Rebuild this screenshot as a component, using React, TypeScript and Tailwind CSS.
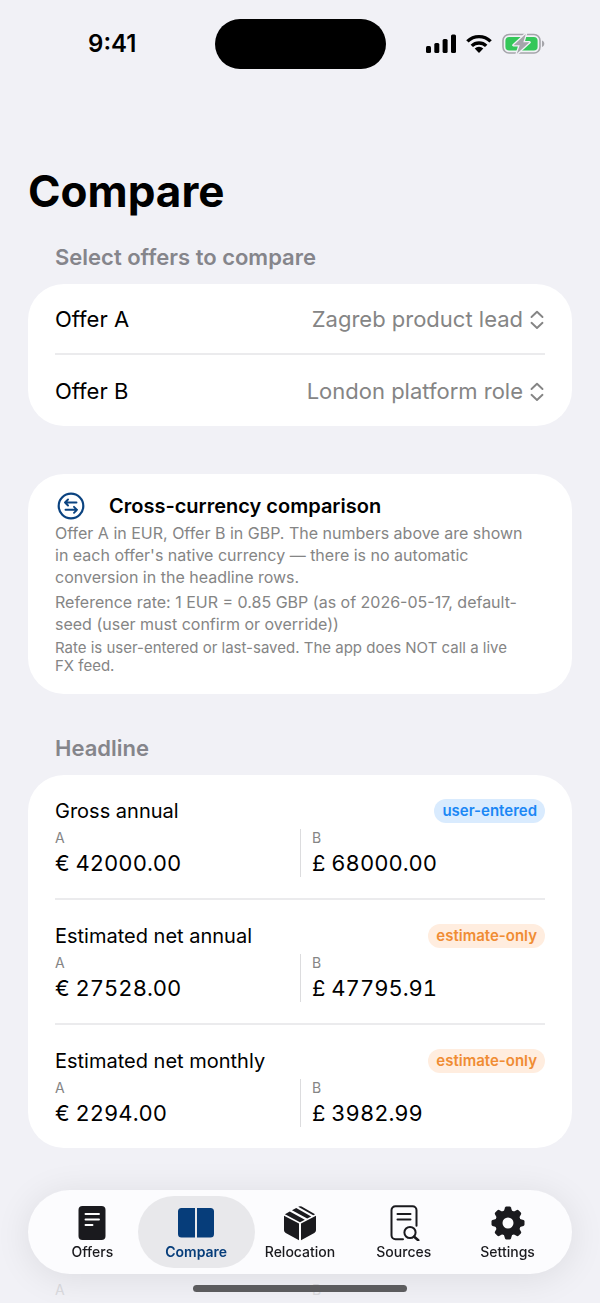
import React, { useState } from 'react';
import clsx from 'clsx';

const offers = ['Zagreb product lead', 'London platform role'];

interface Metric {
  title: string;
  a: string;
  b: string;
  badge: 'user-entered' | 'estimate-only';
}

const metrics: Metric[] = [
  { title: 'Gross annual', a: '€ 42000.00', b: '£ 68000.00', badge: 'user-entered' },
  { title: 'Estimated net annual', a: '€ 27528.00', b: '£ 47795.91', badge: 'estimate-only' },
  { title: 'Estimated net monthly', a: '€ 2294.00', b: '£ 3982.99', badge: 'estimate-only' },
];

const StatusBar: React.FC = () => (
  <header className="grid grid-cols-[1fr_171px_1fr] items-center pt-[19px]">
    <div className="pl-[10px] text-center text-[24px] leading-7 font-semibold">9:41</div>
    <div className="h-[50px] rounded-full bg-black" />
    <div className="flex items-center justify-center gap-[10px] pr-[14px]">
      <svg width="30" height="20" viewBox="0 0 30 20" aria-hidden="true">
        <rect x="0" y="12" width="5" height="7" rx="1.5" />
        <rect x="8.3" y="9" width="5" height="10" rx="1.5" />
        <rect x="16.6" y="5" width="5" height="14" rx="1.5" />
        <rect x="25" y="0.5" width="5" height="18.5" rx="1.5" />
      </svg>
      <svg width="26" height="20" viewBox="0 0 26 20" aria-hidden="true">
        <g fill="none" stroke="#000" strokeWidth="3.4">
          <path d="M1.4 7.4a16.6 16.6 0 0 1 23.2 0" />
          <path d="M5.8 11.9a10.3 10.3 0 0 1 14.4 0" />
        </g>
        <path d="M13 19l-4.3-4.4a6.2 6.2 0 0 1 8.6 0z" />
      </svg>
      <svg width="43" height="22" viewBox="0 0 43 22" aria-hidden="true">
        <rect x="1" y="1.5" width="37" height="18.5" rx="6" fill="none" stroke="#a5a5aa" strokeWidth="1.6" />
        <rect x="3.4" y="4" width="32.2" height="13.6" rx="3.8" fill="#34c759" />
        <path d="M40 7.5v6.4c1.4-.5 2.3-1.8 2.3-3.2S41.4 8 40 7.5z" fill="#a5a5aa" />
        <path
          d="M23.8 1L11.5 12.2h6.2L14.8 20.8 27.5 9.3h-6.2z"
          fill="#a5a5aa"
          stroke="#f1f1f6"
          strokeWidth="2.6"
          strokeLinejoin="round"
          paintOrder="stroke"
        />
      </svg>
    </div>
  </header>
);

const SectionTitle: React.FC<{ children: React.ReactNode }> = ({ children }) => (
  <h2 className="px-[27px] text-[22px] leading-7 font-semibold text-[#85858b]">{children}</h2>
);

const Card: React.FC<{ children: React.ReactNode; className?: string }> = ({ children, className }) => (
  <div className={clsx('rounded-[36px] bg-white px-[27px]', className)}>{children}</div>
);

const OfferRow: React.FC<{ id: string; label: string; initial: string }> = ({ id, label, initial }) => {
  const [value, setValue] = useState(initial);
  return (
    <div className="flex h-[71px] items-center justify-between pt-[2px] text-[22px]">
      <label htmlFor={id}>{label}</label>
      <div className="flex items-center gap-[6px] text-[#858585]">
        <select
          id={id}
          value={value}
          onChange={(e) => setValue(e.target.value)}
          className="appearance-none bg-transparent text-right outline-none [field-sizing:content]"
        >
          {offers.map((offer) => (
            <option key={offer}>{offer}</option>
          ))}
        </select>
        <svg width="16" height="20" viewBox="0 0 16 20" fill="none" stroke="currentColor" strokeWidth="1.9" strokeLinecap="round" strokeLinejoin="round" aria-hidden="true">
          <path d="M2.5 7L8 1.8 13.5 7M2.5 12.8L8 18l5.5-5.2" />
        </svg>
      </div>
    </div>
  );
};

const MetricValue: React.FC<{ label: string; value: string; className?: string }> = ({ label, value, className }) => (
  <div className={className}>
    <div className="text-[14px] leading-[18px] text-[#858585]">{label}</div>
    <div className="mt-[2px] text-[22px] leading-7 tabular-nums">{value}</div>
  </div>
);

const MetricRow: React.FC<{ metric: Metric }> = ({ metric }) => (
  <section className="pt-[22px] pb-[21px]">
    <div className="flex items-center justify-between">
      <h3 className="text-[20px] leading-7">{metric.title}</h3>
      <span
        className={clsx(
          'rounded-full px-2 text-[15px] leading-6 font-semibold',
          metric.badge === 'user-entered' ? 'bg-[#d9ebfe] text-[#1b87f5]' : 'bg-[#ffeddf] text-[#f08c33]'
        )}
      >
        {metric.badge}
      </span>
    </div>
    <div className="mt-1 grid grid-cols-2">
      <MetricValue label="A" value={metric.a} />
      <MetricValue label="B" value={metric.b} className="border-l border-[#dcdcde] pl-[11px]" />
    </div>
  </section>
);

const OffersIcon = () => (
  <svg width="36" height="36" viewBox="0 0 36 36" aria-hidden="true">
    <rect x="4.5" y="1" width="27" height="34" rx="4" fill="#1a1a1e" />
    <path d="M11.5 9H25M11.5 14.500H25M11.5 20h7" stroke="#fff" strokeWidth="1.9" strokeLinecap="round" />
  </svg>
);

const CompareIcon = () => (
  <svg width="38" height="36" viewBox="0 0 38 36" fill="#063d7a" aria-hidden="true">
    <path d="M4.5 3H18v29.500H4.500A3.500 3.500 0 0 1 1 29V6.500A3.500 3.500 0 0 1 4.500 3zM20 3h13.500A3.500 3.500 0 0 1 37 6.500V29a3.500 3.500 0 0 1-3.500 3.500H20z" />
  </svg>
);

const RelocationIcon = () => (
  <svg width="36" height="36" viewBox="0 0 36 36" fill="#1a1a1e" aria-hidden="true">
    <path d="M2 10.800l15 7.700v16.700L3.700 27.900A3 3 0 0 1 2 25.200zM34 10.800l-15 7.700v16.700l13.300-7.300a3 3 0 0 0 1.700-2.700z" />
    <path d="M2.900 9.300L7.800 6.500 22.800 14.700 18 17.200zM10 5.300l4.200-2.400L29.200 11.400 25.200 13.500zM16.200 1.700a3.500 3.500 0 0 1 3.400-.1L33.100 9.300 31.200 10.300z" />
  </svg>
);

const SourcesIcon = () => (
  <svg width="36" height="36" viewBox="0 0 36 36" fill="none" stroke="#1a1a1e" strokeWidth="2" strokeLinecap="round" aria-hidden="true">
    <path d="M17 34.200H9.500a4 4 0 0 1-4-4V5.200a4 4 0 0 1 4-4h17a4 4 0 0 1 4 4v15.500" />
    <path d="M11.5 9h13M11.5 14.500h13" />
    <circle cx="24" cy="27.5" r="5.6" />
    <path d="M28.200 31.700l4 3.500" strokeWidth="2.6" />
  </svg>
);

const teeth = [0, 45, 90, 135, 180, 225, 270, 315];

const SettingsIcon = () => (
  <svg width="36" height="36" viewBox="0 0 36 36" fill="#1a1a1e" aria-hidden="true">
    <circle cx="18" cy="18" r="9.2" fill="none" stroke="#1a1a1e" strokeWidth="7.4" />
    {teeth.map((angle) => (
      <path key={angle} d="M13.700 7L15 2.500q.4-1 1.400-1h3.200q1 0 1.400 1L22.300 7z" transform={`rotate(${angle} 18 18)`} />
    ))}
  </svg>
);

const tabs = [
  { label: 'Offers', icon: OffersIcon },
  { label: 'Compare', icon: CompareIcon },
  { label: 'Relocation', icon: RelocationIcon },
  { label: 'Sources', icon: SourcesIcon },
  { label: 'Settings', icon: SettingsIcon },
];

const TabBar: React.FC = () => {
  const [active, setActive] = useState('Compare');
  return (
    <div className="fixed inset-x-0 bottom-0 px-7 pb-[11px]">
      <nav className="flex -space-x-[13px] rounded-full bg-[#fcfcfe] p-[6px] shadow-[0_4px_36px_rgba(0,0,0,0.09)]">
        {tabs.map(({ label, icon: Icon }) => (
          <button
            key={label}
            type="button"
            onClick={() => setActive(label)}
            className={clsx(
              'flex h-[72px] min-w-0 flex-1 flex-col items-center justify-center rounded-full text-[14px] leading-4',
              label === active ? 'bg-[#e8e8eb] font-semibold text-[#063d7a]' : 'font-medium text-[#1a1a1e]'
            )}
          >
            <Icon />
            <span className="mt-[3px]">{label}</span>
          </button>
        ))}
      </nav>
      <div className="mx-auto mt-[11px] h-[7px] w-[214px] rounded-full bg-[#5c5c5e]" />
    </div>
  );
};

const App: React.FC = () => (
  <div className="min-h-screen bg-[#f1f1f6] font-['Inter','Liberation_Sans',sans-serif] text-black">
    <StatusBar />
    <main className="px-7 pt-[94px]">
      <h1 className="text-[44px] leading-[56px] font-bold">Compare</h1>
      <div className="mt-6">
        <SectionTitle>Select offers to compare</SectionTitle>
      </div>
      <Card className="mt-[13px] divide-y-2 divide-[#ebebed]">
        <OfferRow id="offer-a" label="Offer A" initial={offers[0]} />
        <OfferRow id="offer-b" label="Offer B" initial={offers[1]} />
      </Card>

      <Card className="mt-12 pt-[17px] pb-[19px]">
        <div className="flex items-center gap-6">
          <svg width="30" height="30" viewBox="0 0 30 30" fill="none" stroke="#0b4380" strokeWidth="1.9" strokeLinecap="round" strokeLinejoin="round" aria-hidden="true">
            <circle cx="16" cy="15" r="12.3" strokeWidth="2.2" />
            <path d="M21.5 11.500H10M13 8.500l-3 3 3 3M10.500 18.800H22M19 15.800l3 3-3 3" />
          </svg>
          <h2 className="text-[20px] leading-7 font-semibold">Cross-currency comparison</h2>
        </div>
        <div className="mt-px pr-4 text-[16px] leading-[22px] text-[#858585]">
          <p>
            Offer A in EUR, Offer B in GBP. The numbers above are shown in each offer's native currency — there is no
            automatic conversion in the headline rows.
          </p>
          <p className="mt-[3px]">
            Reference rate: 1 EUR = 0.85 GBP (as of 2026-05-17, default-seed (user must confirm or override))
          </p>
          <p className="mt-1 text-[15px] leading-[18px]">
            Rate is user-entered or last-saved. The app does NOT call a live FX&nbsp;feed.
          </p>
        </div>
      </Card>

      <div className="mt-10">
        <SectionTitle>Headline</SectionTitle>
      </div>
      <Card className="mt-[13px] divide-y-2 divide-[#ebebed]">
        {metrics.map((metric) => (
          <MetricRow key={metric.title} metric={metric} />
        ))}
      </Card>

      {/* next rows, faded out under the tab bar */}
      <div className="mt-[133px] grid grid-cols-2 px-[27px] text-[14px] leading-[18px] text-[#dadade]">
        <span>A</span>
        <span className="pl-3">B</span>
      </div>
    </main>
    <TabBar />
  </div>
);

export default App;
